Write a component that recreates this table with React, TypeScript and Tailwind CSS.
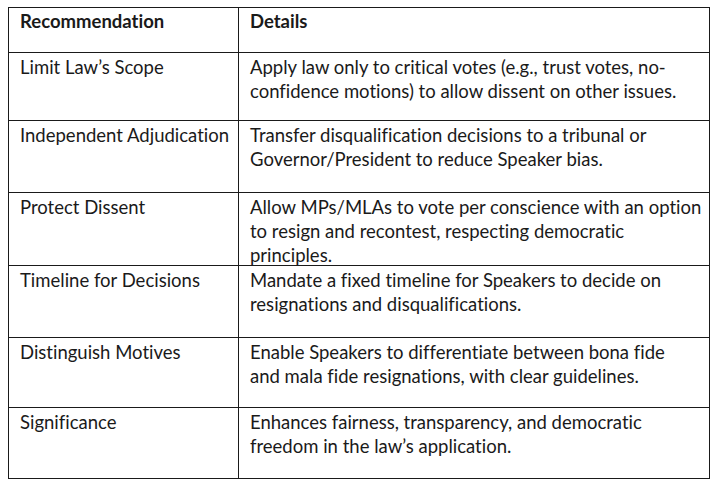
import React from "react";

const rows: [string, string[]][] = [
  ["Limit Law’s Scope", ["Apply law only to critical votes (e.g., trust votes, no-", "confidence motions) to allow dissent on other issues."]],
  ["Independent Adjudication", ["Transfer disqualification decisions to a tribunal or", "Governor/President to reduce Speaker bias."]],
  ["Protect Dissent", ["Allow MPs/MLAs to vote per conscience with an option", "to resign and recontest, respecting democratic", "principles."]],
  ["Timeline for Decisions", ["Mandate a fixed timeline for Speakers to decide on", "resignations and disqualifications."]],
  ["Distinguish Motives", ["Enable Speakers to differentiate between bona fide", "and mala fide resignations, with clear guidelines."]],
  ["Significance", ["Enhances fairness, transparency, and democratic", "freedom in the law’s application."]],
];

const heights = ["h-[68px]", "h-[72px]", "h-[73px]", "h-[72px]", "h-[70px]", "h-[70px]"];

export default function App() {
  return (
    <div className="w-[720px] h-[486px] bg-white overflow-hidden" style={{ fontFamily: "Lato, 'Open Sans', sans-serif" }}>
      <div className="ml-[8px] mt-[7px] w-[702px] border border-[#1a1a1a] text-[18.5px] leading-[24px] text-[#1a1a1a] [font-variant-ligatures:none]">
        <div className="grid grid-cols-[230px_1fr] h-[45px] border-b border-[#1a1a1a] font-bold">
          <div className="border-r border-[#1a1a1a] pl-[11px] pt-[1px]">Recommendation</div>
          <div className="pl-[11px] pt-[1px]">Details</div>
        </div>
        {rows.map(([k, lines], i) => (
          <div
            key={k}
            className={`grid grid-cols-[230px_1fr] ${heights[i]} ${i < rows.length - 1 ? "border-b border-[#1a1a1a]" : ""}`}
          >
            <div className="border-r border-[#1a1a1a] pl-[11px] pt-[2px] whitespace-nowrap">{k}</div>
            <div className="pl-[11px] pt-[2px]">
              {lines.map((l) => (
                <div key={l} className="whitespace-nowrap">{l}</div>
              ))}
            </div>
          </div>
        ))}
      </div>
    </div>
  );
}
